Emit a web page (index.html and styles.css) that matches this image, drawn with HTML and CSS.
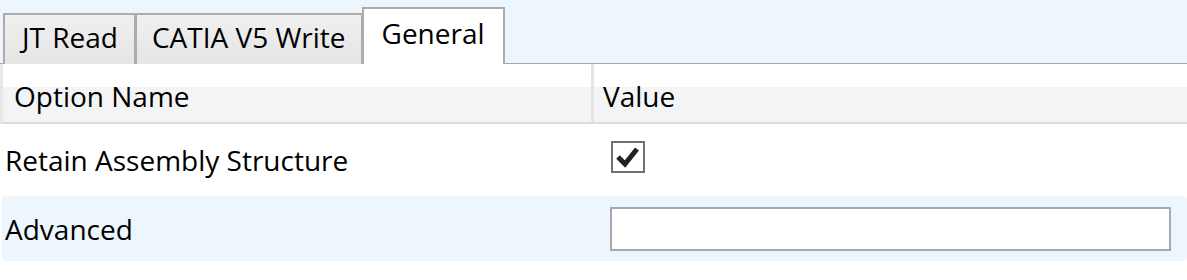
FILE: index.html
```html
<!DOCTYPE html>
<html lang="en">
	<head>
		<title>Options</title>
		<link rel="stylesheet" href="styles.css">
	</head>
	<body>
		<div class="tabstrip">
			<span class="tab first">JT Read</span>
			<span class="tab">CATIA V5 Write</span>
			<span class="tab active">General</span>
		</div>
		<div class="grid-head">
			<div class="head-cell first">Option Name</div>
			<div class="head-cell">Value</div>
		</div>
		<div class="row">
			<div class="label">Retain Assembly Structure</div>
			<div class="value">
				<span class="check">
					<svg width="26" height="22" viewBox="0 0 26 22"><path d="M3 11 L10 18 L22 3" fill="none" stroke="#222" stroke-width="5"/></svg>
				</span>
			</div>
		</div>
		<div class="row alt">
			<div class="label">Advanced</div>
			<div class="value"><input class="field" type="text"></div>
		</div>
	</body>
</html>
```

FILE: styles.css
```css
body, html {
	margin:0;
	padding:0;
	font-family:"Open Sans",sans-serif;
	font-size:28px;
	color:#000;
	background:white;
}
.tabstrip {
	display:flex;
	align-items:flex-end;
	height:64px;
	padding-left:3px;
	background:#eef6fd;
	border-bottom:1px solid #a8a8a8;
	box-sizing:border-box;
}
.tab {
	display:flex;
	align-items:center;
	height:51px;
	padding:0 15px 5px 15px;
	margin-bottom:-1px;
	border:2px solid #acacac;
	border-bottom:none;
	background:linear-gradient(#f0f0f0, #e5e5e5);
	box-sizing:border-box;
}
.tab.first {
	padding:0 16px 5px 17px;
}
.tab + .tab {
	margin-left:-1px;
}
.tab.active {
	height:57px;
	padding:0 18px 8px 18px;
	background:white;
}
.grid-head {
	display:grid;
	grid-template-columns:591px 1fr;
	height:60px;
	border-left:3px solid #e8e8e8;
	border-bottom:2px solid #dcdcdc;
	box-sizing:border-box;
}
.head-cell {
	display:flex;
	align-items:center;
	padding:5px 12px 0 9px;
	background:linear-gradient(#fff 0, #fff 40%, #f3f4f6 40%, #f3f4f6 100%);
}
.head-cell.first {
	padding-left:11px;
	border-right:3px solid #e4e4e4;
}
.row {
	display:grid;
	grid-template-columns:592px 1fr;
	height:72px;
	align-items:center;
}
.row.alt {
	height:65px;
	margin-left:2px;
	border-radius:4px;
	background:#eef6fd;
	grid-template-columns:590px 1fr;
}
.label {
	padding-left:5px;
}
.row.alt .label {
	padding-left:3px;
}
.value {
	padding-left:19px;
}
.row.alt .value {
	padding-left:18px;
	padding-right:16px;
}
.check {
	display:flex;
	align-items:center;
	justify-content:center;
	width:34px;
	height:32px;
	border:2px solid #707070;
	box-sizing:border-box;
	background:white;
	margin-top:-7px;
}
.field {
	display:block;
	width:100%;
	height:44px;
	border:2px solid #a6a9ae;
	box-sizing:border-box;
	background:white;
	font:inherit;
}
```
